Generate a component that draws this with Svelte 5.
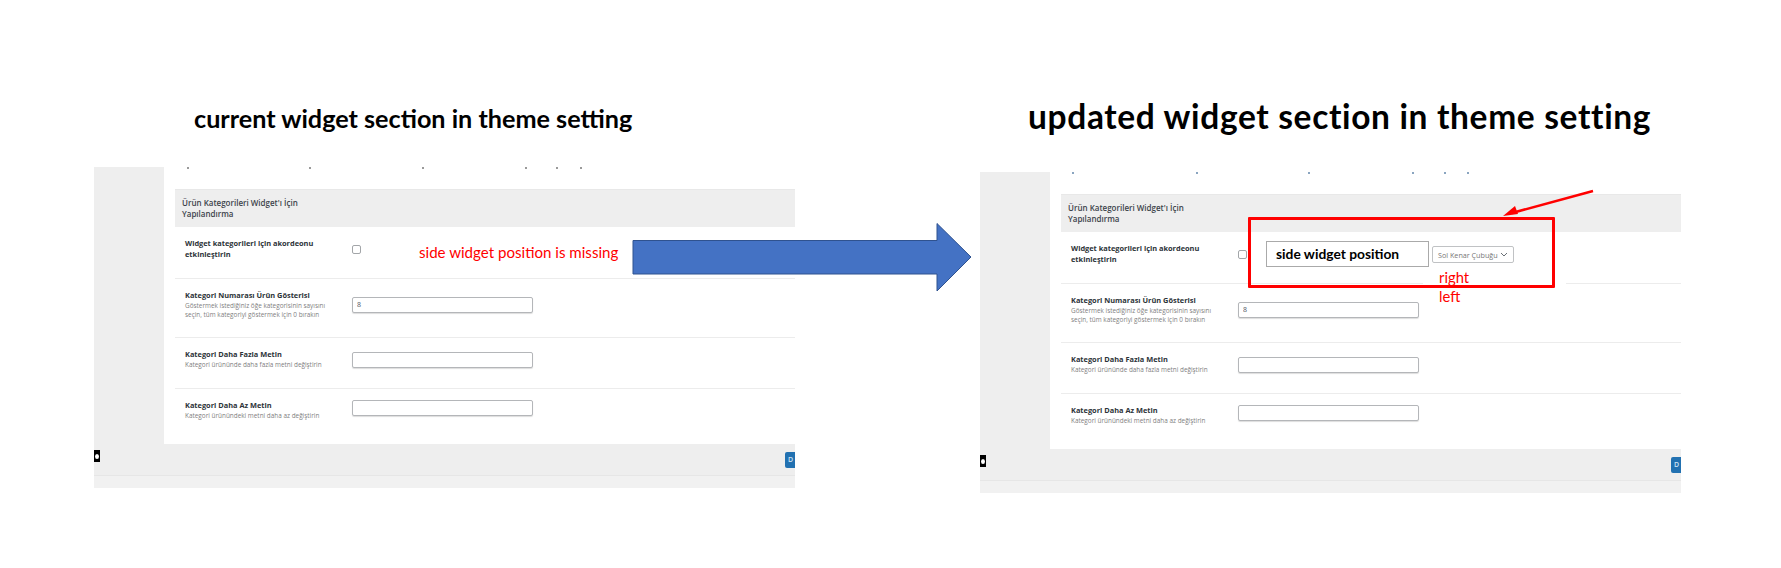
<script>
  const specks = {
    current: [12, 134, 247, 350, 381, 405],
    updated: [11, 135, 247, 351, 383, 406]
  };

  const rows = [
    { label: "Kategori Numarası Ürün Gösterisi", help: ["Göstermek istediğiniz öğe kategorisinin sayısını", "seçin, tüm kategoriyi göstermek için 0 bırakın"], value: "8" },
    { label: "Kategori Daha Fazla Metin", help: ["Kategori ürününde daha fazla metni değiştirin"], value: "" },
    { label: "Kategori Daha Az Metin", help: ["Kategori ürünündeki metni daha az değiştirin"], value: "" }
  ];
</script>

{#snippet panel(kind)}
  <div class="panel">
    <div class="panel-body">
      <div class="sidebar"></div>
      <div class="main">
        <div class="cut-line">
          {#each specks[kind] as left}
            <span class="speck" class:blue={kind === "updated"} style="left: {left}px"></span>
          {/each}
        </div>
        <div class="section-head">Ürün Kategorileri Widget'ı İçin<br />Yapılandırma</div>
        <div class="row">
          <div class="label-cell"><div class="label">Widget kategorileri için akordeonu<br />etkinleştirin</div></div>
          <div><input class="check" type="checkbox" /></div>
        </div>
        {#each rows as row}
          <div class="row">
            <div class="label-cell">
              <div class="label">{row.label}</div>
              {#each row.help as line}
                <div class="help">{line}</div>
              {/each}
            </div>
            <div><input class="text-input" type="text" value={row.value} /></div>
          </div>
        {/each}
      </div>
    </div>
    <div class="footer">
      <span class="footer-icon"><span class="footer-dot"></span></span>
      <span class="save-btn">D</span>
    </div>
    <div class="strip"></div>
  </div>
{/snippet}

<div class="page">
  <section class="col current">
    <h2 class="title">current widget section in theme setting</h2>
    {@render panel("current")}
  </section>
  <section class="col updated">
    <h2 class="title">updated widget section in theme setting</h2>
    {@render panel("updated")}
  </section>

  <div class="missing-note">side widget position is missing</div>

  <svg class="flow-arrow" width="342" height="72" viewBox="0 0 342 72" aria-hidden="true">
    <path d="M1 18.5H305V1.5L339 35L305 69V52H1Z" fill="#4472c4" stroke="#2f528f" stroke-width="1" />
  </svg>

  <div class="line-patch"></div>
  <div class="callout"></div>
  <div class="field-name">side widget position</div>
  <div class="fake-select">
    <span>Sol Kenar Çubuğu</span>
    <svg width="8" height="5" viewBox="0 0 8 5" aria-hidden="true"><path d="M1 1l3 3 3-3" fill="none" stroke="#6a7076" stroke-width="1" /></svg>
  </div>
  <div class="options"><div>right</div><div>left</div></div>

  <svg class="red-arrow" width="96" height="30" viewBox="0 0 96 30" aria-hidden="true">
    <path d="M93 2L12 24" stroke="#ff0000" stroke-width="2.6" fill="none" />
    <path d="M3 27L15 17L18 25Z" fill="#ff0000" />
  </svg>
</div>

<style>
  :global(body) {
    margin: 0;
    background: #fff;
  }

  .page {
    position: relative;
    display: flex;
    gap: 185px;
    width: 1781px;
    height: 568px;
    padding-left: 94px;
    box-sizing: border-box;
    overflow: hidden;
    font-family: "Open Sans", "Liberation Sans", sans-serif;
  }

  .col {
    width: 701px;
  }

  .title {
    margin: 0;
    font-family: Lato, "Open Sans", sans-serif;
    font-weight: 700;
    color: #000;
    white-space: nowrap;
  }

  .current .title {
    padding: 99px 0 30px 100px;
    font-size: 25.2px;
    line-height: 38px;
  }

  .updated .title {
    padding: 96px 0 36px 48px;
    font-size: 33.5px;
    letter-spacing: 0.65px;
    line-height: 40px;
  }

  .panel {
    display: flex;
    flex-direction: column;
    height: 321px;
  }

  .panel-body {
    display: flex;
    height: 277px;
  }

  .sidebar {
    width: 70px;
    background: #eeeeee;
  }

  .main {
    flex: 1;
    display: flex;
    flex-direction: column;
    padding-left: 11px;
    background: #fff;
  }

  .cut-line {
    position: relative;
    height: 22px;
    flex: none;
  }

  .speck {
    position: absolute;
    top: 0;
    width: 2px;
    height: 1.5px;
    background: #9a9a9a;
  }

  .speck.blue {
    background: #8aa5c0;
  }

  .section-head {
    flex: none;
    height: 38px;
    box-sizing: border-box;
    padding: 7px 7px;
    background: #eeeeee;
    border-top: 1px solid #e8e8e8;
    font-size: 8px;
    font-weight: 600;
    line-height: 11px;
    color: #3c434a;
  }

  .row {
    display: grid;
    grid-template-columns: 167px 1fr;
    align-items: center;
    padding: 11px 0 18px 10px;
    border-bottom: 1px solid #ececec;
    flex: none;
  }

  .row:last-child {
    flex: 1;
    align-items: start;
    border-bottom: none;
  }

  .label-cell {
    min-height: 21px;
  }

  .label {
    font-size: 7.4px;
    font-weight: 700;
    line-height: 11px;
    color: #2c3338;
  }

  .help {
    font-size: 6.4px;
    line-height: 9px;
    color: #808080;
  }

  .check {
    appearance: none;
    display: block;
    width: 9px;
    height: 9px;
    margin: 0;
    border: 1px solid #a3a6a9;
    border-radius: 2px;
    background: #fff;
    box-sizing: border-box;
  }

  .text-input {
    display: block;
    width: 181px;
    height: 16px;
    margin: 0;
    padding: 0 4px;
    box-sizing: border-box;
    border: 1px solid #b4b6b9;
    border-radius: 2px;
    box-shadow: 0 1px 1px #ddd;
    font-family: inherit;
    font-size: 7px;
    color: #50575e;
    background: #fff;
  }

  .footer {
    flex: none;
    height: 32px;
    display: flex;
    align-items: flex-start;
    justify-content: space-between;
    box-sizing: border-box;
    padding-top: 6px;
    background: #eeeeee;
    border-bottom: 1px solid #e6e6e6;
  }

  .footer-icon {
    display: flex;
    align-items: center;
    justify-content: center;
    width: 6px;
    height: 12px;
    background: #000;
  }

  .footer-dot {
    width: 4px;
    height: 5px;
    border-radius: 50%;
    background: #fff;
  }

  .save-btn {
    width: 10px;
    height: 16px;
    margin-top: 2px;
    padding-left: 3px;
    box-sizing: border-box;
    border-radius: 2px 0 0 2px;
    background: #2271b1;
    color: #cfe2f3;
    font-size: 7px;
    font-weight: 600;
    line-height: 16px;
    overflow: hidden;
  }

  .strip {
    flex: none;
    height: 12px;
    background: #f1f1f1;
  }

  .missing-note {
    position: absolute;
    left: 419px;
    top: 243px;
    font-family: Lato, "Open Sans", sans-serif;
    font-size: 15.1px;
    line-height: 18px;
    color: #ff0000;
    white-space: nowrap;
  }

  .flow-arrow {
    position: absolute;
    left: 632px;
    top: 222px;
  }

  .line-patch {
    position: absolute;
    left: 1423px;
    top: 283px;
    width: 143px;
    height: 3px;
    background: #fff;
  }

  .callout {
    position: absolute;
    left: 1248px;
    top: 217px;
    width: 307px;
    height: 71px;
    box-sizing: border-box;
    border: 3.5px solid #ff0000;
    border-radius: 1px;
  }

  .field-name {
    position: absolute;
    left: 1266px;
    top: 241px;
    width: 163px;
    height: 26px;
    box-sizing: border-box;
    padding-left: 9px;
    border: 1px solid #aaa;
    background: #fff;
    font-family: Lato, "Open Sans", sans-serif;
    font-size: 13.8px;
    font-weight: 700;
    line-height: 24px;
    color: #000;
    white-space: nowrap;
  }

  .fake-select {
    position: absolute;
    left: 1432px;
    top: 246px;
    width: 82px;
    height: 17px;
    display: flex;
    align-items: center;
    justify-content: space-between;
    box-sizing: border-box;
    padding: 0 5px 0 5px;
    border: 1px solid #c0c2c4;
    border-radius: 2px;
    background: #fff;
    font-size: 7.2px;
    color: #777;
    white-space: nowrap;
  }

  .options {
    position: absolute;
    left: 1439px;
    top: 268px;
    font-family: Lato, "Open Sans", sans-serif;
    font-size: 14.8px;
    line-height: 19px;
    color: #ff0000;
  }

  .red-arrow {
    position: absolute;
    left: 1500px;
    top: 189px;
  }
</style>
